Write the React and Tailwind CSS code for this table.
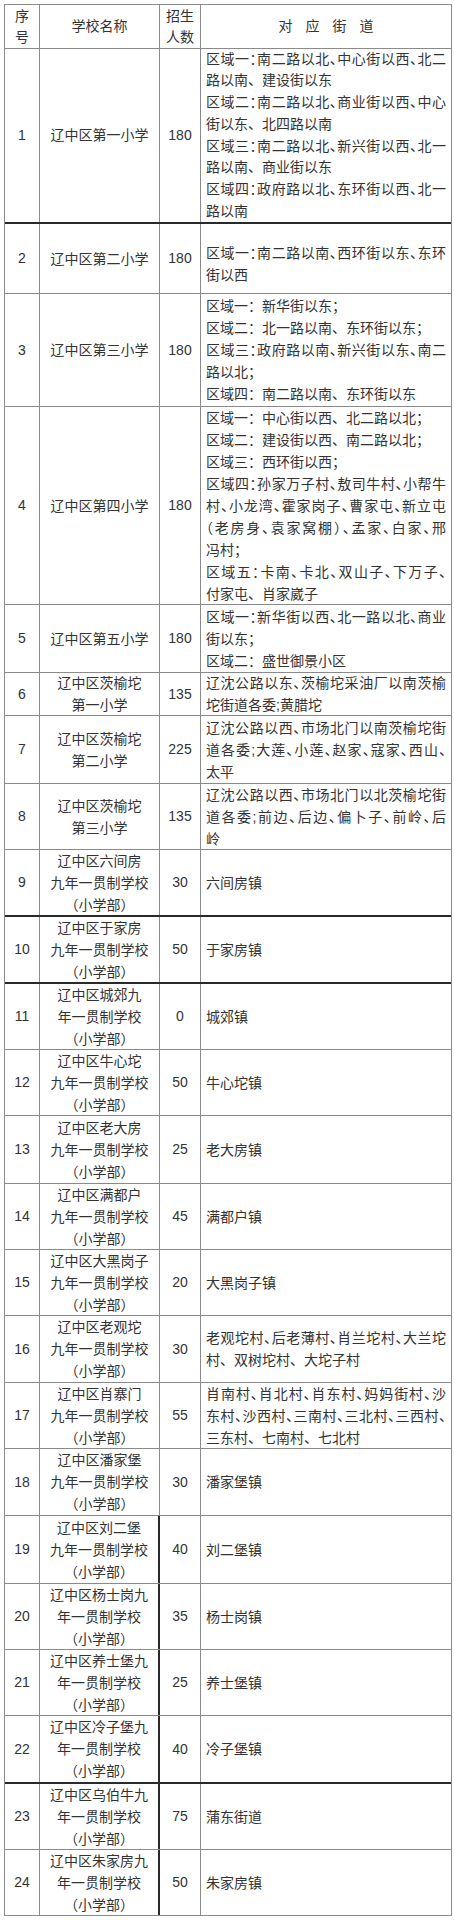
const ROWS = [
  {
    n: '1', name: ['辽中区第一小学'], count: '180', h: 175, lh: 21.75, thick: true,
    addr: [
      ['区域一：南二路以北、中心街以西、北二', 1],
      ['路以南、建设街以东', 0],
      ['区域二：南二路以北、商业街以西、中心', 1],
      ['街以东、北四路以南', 0],
      ['区域三：南二路以北、新兴街以西、北一', 1],
      ['路以南、商业街以东', 0],
      ['区域四：政府路以北、东环街以西、北一', 1],
      ['路以南', 0],
    ],
  },
  {
    n: '2', name: ['辽中区第二小学'], count: '180', h: 70, pt: 10,
    addr: [
      ['区域一：南二路以南、西环街以东、东环', 1],
      ['街以西', 0],
    ],
  },
  {
    n: '3', name: ['辽中区第三小学'], count: '180', h: 113,
    addr: [
      ['区域一：新华街以东；', 0],
      ['区域二：北一路以南、东环街以东；', 0],
      ['区域三：政府路以南、新兴街以东、南二', 1],
      ['路以北；', 0],
      ['区域四：南二路以南、东环街以东', 0],
    ],
  },
  {
    n: '4', name: ['辽中区第四小学'], count: '180', h: 198,
    addr: [
      ['区域一：中心街以西、北二路以北；', 0],
      ['区域二：建设街以西、南二路以北；', 0],
      ['区域三：西环街以西；', 0],
      ['区域四：孙家万子村、敖司牛村、小帮牛', 1],
      ['村、小龙湾、霍家岗子、曹家屯、新立屯', 1],
      ['（老房身、袁家窝棚）、孟家、白家、邢', 1],
      ['冯村；', 0],
      ['区域五：卡南、卡北、双山子、下万子、', 1],
      ['付家屯、肖家崴子', 0],
    ],
  },
  {
    n: '5', name: ['辽中区第五小学'], count: '180', h: 68,
    addr: [
      ['区域一：新华街以西、北一路以北、商业', 1],
      ['街以东；', 0],
      ['区域二：盛世御景小区', 0],
    ],
  },
  {
    n: '6', name: ['辽中区茨榆坨', '第一小学'], count: '135', h: 43,
    addr: [
      ['辽沈公路以东、茨榆坨采油厂以南茨榆', 1],
      ['坨街道各委;黄腊坨', 0],
    ],
  },
  {
    n: '7', name: ['辽中区茨榆坨', '第二小学'], count: '225', h: 68,
    addr: [
      ['辽沈公路以西、市场北门以南茨榆坨街', 1],
      ['道各委;大莲、小莲、赵家、寇家、西山、', 1],
      ['太平', 0],
    ],
  },
  {
    n: '8', name: ['辽中区茨榆坨', '第三小学'], count: '135', h: 66,
    addr: [
      ['辽沈公路以西、市场北门以北茨榆坨街', 1],
      ['道各委;前边、后边、偏卜子、前岭、后', 1],
      ['岭', 0],
    ],
  },
  { n: '9', name: ['辽中区六间房', '九年一贯制学校', '（小学部）'], count: '30', h: 67, thick: true, addr: [['六间房镇', 0]] },
  { n: '10', name: ['辽中区于家房', '九年一贯制学校', '（小学部）'], count: '50', h: 67, thick: true, addr: [['于家房镇', 0]] },
  { n: '11', name: ['辽中区城郊九', '年一贯制学校', '（小学部）'], count: '0', h: 66, addr: [['城郊镇', 0]] },
  { n: '12', name: ['辽中区牛心坨', '九年一贯制学校', '（小学部）'], count: '50', h: 66, addr: [['牛心坨镇', 0]] },
  { n: '13', name: ['辽中区老大房', '九年一贯制学校', '（小学部）'], count: '25', h: 68, addr: [['老大房镇', 0]] },
  { n: '14', name: ['辽中区满都户', '九年一贯制学校', '（小学部）'], count: '45', h: 66, addr: [['满都户镇', 0]] },
  { n: '15', name: ['辽中区大黑岗子', '九年一贯制学校', '（小学部）'], count: '20', h: 66, addr: [['大黑岗子镇', 0]] },
  {
    n: '16', name: ['辽中区老观坨', '九年一贯制学校', '（小学部）'], count: '30', h: 67,
    addr: [
      ['老观坨村、后老薄村、肖兰坨村、大兰坨', 1],
      ['村、双树坨村、大坨子村', 0],
    ],
  },
  {
    n: '17', name: ['辽中区肖寨门', '九年一贯制学校', '（小学部）'], count: '55', h: 66,
    addr: [
      ['肖南村、肖北村、肖东村、妈妈街村、沙', 1],
      ['东村、沙西村、三南村、三北村、三西村、', 1],
      ['三东村、七南村、七北村', 0],
    ],
  },
  { n: '18', name: ['辽中区潘家堡', '九年一贯制学校', '（小学部）'], count: '30', h: 67, addr: [['潘家堡镇', 0]] },
  { n: '19', name: ['辽中区刘二堡', '九年一贯制学校', '（小学部）'], count: '40', h: 68, bold: true, addr: [['刘二堡镇', 0]] },
  { n: '20', name: ['辽中区杨士岗九', '年一贯制学校', '（小学部）'], count: '35', h: 66, bold: true, addr: [['杨士岗镇', 0]] },
  { n: '21', name: ['辽中区养士堡九', '年一贯制学校', '（小学部）'], count: '25', h: 66, bold: true, addr: [['养士堡镇', 0]] },
  { n: '22', name: ['辽中区冷子堡九', '年一贯制学校', '（小学部）'], count: '40', h: 68, bold: true, thick: true, addr: [['冷子堡镇', 0]] },
  { n: '23', name: ['辽中区乌伯牛九', '年一贯制学校', '（小学部）'], count: '75', h: 66, bold: true, addr: [['蒲东街道', 0]] },
  { n: '24', name: ['辽中区朱家房九', '年一贯制学校', '（小学部）'], count: '50', h: 66, bold: true, addr: [['朱家房镇', 0]] },
];

function Row({ row }) {
  const lh = row.lh || 22;
  return (
    <div
      className={`flex border-b ${row.thick ? 'border-b-2 border-b-[#2a2a2a]' : 'border-b-[#8a8a8a]'}`}
      style={{ height: row.h }}
    >
      <div className="w-[35px] shrink-0 flex items-center justify-center border-r border-[#8a8a8a]">
        {row.n}
      </div>
      <div
        className={`w-[120px] shrink-0 flex flex-col items-center justify-center text-center ${
          row.bold ? 'border-r-2 border-[#2a2a2a]' : 'border-r border-[#8a8a8a]'
        }`}
        style={{ lineHeight: `${lh}px` }}
      >
        {row.name.map((l) => (
          <div key={l} className="whitespace-nowrap">{l}</div>
        ))}
      </div>
      <div className="w-[41px] shrink-0 flex items-center justify-center border-r border-[#8a8a8a]">
        {row.count}
      </div>
      <div
        className="flex-1 min-w-0 flex flex-col justify-center pl-[5px] pr-[5px]"
        style={{ lineHeight: `${lh}px`, paddingTop: row.pt || 0 }}
      >
        {row.addr.map(([t, full]) => (
          <div
            key={t}
            className={
              full
                ? 'whitespace-nowrap text-justify [text-align-last:justify] [font-feature-settings:"halt"]'
                : 'whitespace-nowrap'
            }
          >
            {t}
          </div>
        ))}
      </div>
    </div>
  );
}

export default function App() {
  return (
    <div className="min-h-[1920px] bg-white pt-[4px] pl-[4px] font-['Liberation_Sans','Noto_Sans_CJK_SC',sans-serif] text-[14px] text-[#333]">
      <div className="w-[448px] border border-b-0 border-[#8a8a8a]">
        {/* header */}
        <div className="flex h-[44px] border-b border-[#8a8a8a]">
          <div className="w-[35px] shrink-0 flex flex-col items-center justify-center leading-[21px] border-r border-[#8a8a8a]">
            <div>序</div>
            <div>号</div>
          </div>
          <div className="w-[120px] shrink-0 flex items-center justify-center border-r border-[#8a8a8a]">
            学校名称
          </div>
          <div className="w-[41px] shrink-0 flex flex-col items-center justify-center leading-[21px] border-r border-[#8a8a8a]">
            <div>招生</div>
            <div>人数</div>
          </div>
          <div className="flex-1 flex items-center justify-center tracking-[13px] pl-[13px]">
            对应街道
          </div>
        </div>

        {ROWS.map((r) => (
          <Row key={r.n} row={r} />
        ))}
      </div>
    </div>
  );
}
